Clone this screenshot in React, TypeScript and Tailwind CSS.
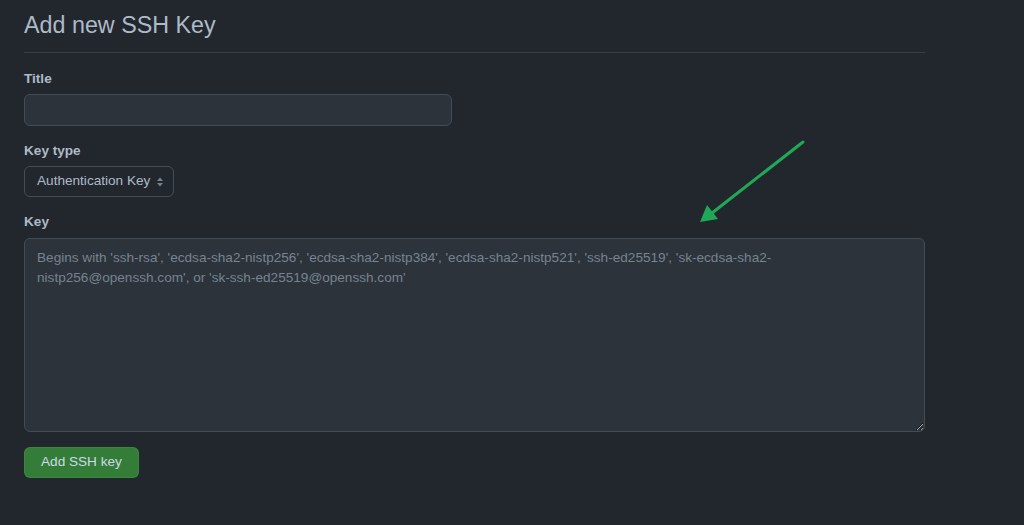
import React from 'react';

const font = { fontFamily: '"Liberation Sans", Arial, sans-serif' };

const App: React.FC = () => {
  return (
    <div className="relative w-[1024px] h-[525px] overflow-hidden bg-[#22272e] text-[#adbac7]" style={font}>
      <div className="w-[901px] ml-6">
        {/* Header */}
        <h2 className="pt-[7px] pb-[9px] border-b border-[#373e47] text-[23.3px] leading-[36px] font-normal text-[#adbac7]">
          Add new SSH Key
        </h2>

        <form className="flex flex-col gap-[14px] mt-[15px]" onSubmit={(e) => e.preventDefault()}>
          <div className="flex flex-col">
            <label className="text-[13.6px] leading-[21px] font-bold mb-[5px]">Title</label>
            <input
              type="text"
              className="w-[428px] h-8 px-3 rounded-md border border-[#444c56] bg-[#2d333b] text-sm text-[#adbac7] outline-none"
            />
          </div>

          <div className="flex flex-col items-start">
            <label className="text-[13.6px] leading-[21px] font-bold mb-[5px]">Key type</label>
            <div className="flex items-center h-[31px] w-[150px] pl-3 pr-2 rounded-md border border-[#444c56] bg-[#22272e] text-[13.6px] text-[#adbac7]">
              <span className="flex-1">Authentication Key</span>
              <svg width="10" height="12" viewBox="0 0 10 12" className="text-[#768390]">
                <path d="M5 1.5 L8 5 H2 Z" fill="currentColor" />
                <path d="M5 10.5 L8 7 H2 Z" fill="currentColor" />
              </svg>
            </div>
          </div>

          <div className="flex flex-col">
            <label className="text-[13.6px] leading-[21px] font-bold mb-[6px]">Key</label>
            <textarea
              placeholder="Begins with 'ssh-rsa', 'ecdsa-sha2-nistp256', 'ecdsa-sha2-nistp384', 'ecdsa-sha2-nistp521', 'ssh-ed25519', 'sk-ecdsa-sha2-nistp256@openssh.com', or 'sk-ssh-ed25519@openssh.com'"
              className="w-[901px] h-[194px] px-3 pt-[9px] rounded-md border border-[#444c56] bg-[#2d333b] text-[13.6px] leading-5 text-[#adbac7] placeholder:text-[#768390] outline-none"
              style={font}
            />
          </div>

          <div className="mt-[1px]">
            <button
              type="submit"
              className="h-[31px] px-4 rounded-md bg-[#347d39] border border-[#46954a]/40 text-[13.6px] text-[#cdd9e5] font-normal"
            >
              Add SSH key
            </button>
          </div>
        </form>
      </div>

      {/* Annotation arrow */}
      <svg className="absolute left-0 top-0 pointer-events-none" width="1024" height="525">
        <line x1="803" y1="142" x2="712" y2="213" stroke="#1fa855" strokeWidth="3" strokeLinecap="round" />
        <path d="M700 222 L707 205 L718 219 Z" fill="#1fa855" />
      </svg>
    </div>
  );
};

export default App;
